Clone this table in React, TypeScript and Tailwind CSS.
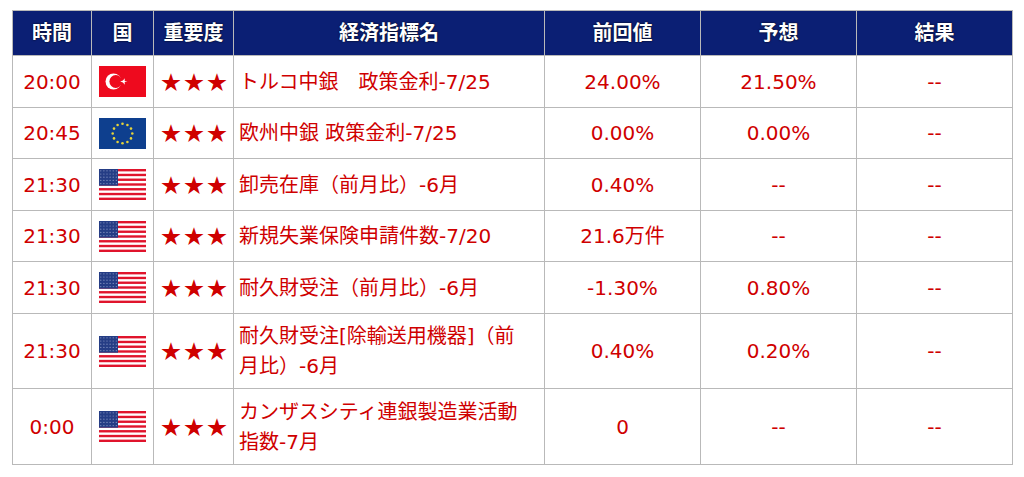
import React from "react";

const FONT = '"DejaVu Sans","Noto Sans CJK JP",sans-serif';

type Row = { time: string; flag: "tr" | "eu" | "us"; name: string; prev: string; fc: string; res: string };

const rows: Row[] = [
  { time: "20:00", flag: "tr", name: "トルコ中銀　政策金利-7/25", prev: "24.00%", fc: "21.50%", res: "--" },
  { time: "20:45", flag: "eu", name: "欧州中銀 政策金利-7/25", prev: "0.00%", fc: "0.00%", res: "--" },
  { time: "21:30", flag: "us", name: "卸売在庫（前月比）-6月", prev: "0.40%", fc: "--", res: "--" },
  { time: "21:30", flag: "us", name: "新規失業保険申請件数-7/20", prev: "21.6万件", fc: "--", res: "--" },
  { time: "21:30", flag: "us", name: "耐久財受注（前月比）-6月", prev: "-1.30%", fc: "0.80%", res: "--" },
  { time: "21:30", flag: "us", name: "耐久財受注[除輸送用機器]（前月比）-6月", prev: "0.40%", fc: "0.20%", res: "--" },
  { time: "0:00", flag: "us", name: "カンザスシティ連銀製造業活動指数-7月", prev: "0", fc: "--", res: "--" },
];

function TurkeyFlag() {
  return (
    <svg width="47" height="31" viewBox="0 0 47 31">
      <rect width="47" height="31" fill="#ee0a1e" />
      <circle cx="14.5" cy="15.5" r="8" fill="#fff" />
      <circle cx="16.8" cy="15.5" r="6.4" fill="#ee0a1e" />
      <polygon
        fill="#fff"
        points="21.2,15.5 24,14.6 25.7,12.2 25.7,15.1 28.5,15.5 25.7,15.9 25.7,18.8 24,16.4"
      />
    </svg>
  );
}

function EUFlag() {
  const stars = Array.from({ length: 12 }, (_, i) => {
    const a = (i * Math.PI * 2) / 12;
    return { x: 23.5 + Math.sin(a) * 9.8, y: 15.5 - Math.cos(a) * 9.8 };
  });
  return (
    <svg width="47" height="31" viewBox="0 0 47 31">
      <rect width="47" height="31" fill="#0e3f8e" />
      {stars.map((s, i) => (
        <circle key={i} cx={s.x} cy={s.y} r="1.3" fill="#e6d43a" />
      ))}
    </svg>
  );
}

function USFlag() {
  const sh = 31 / 13;
  const dots: { x: number; y: number }[] = [];
  for (let r = 0; r < 5; r++) for (let c = 0; c < 6; c++) dots.push({ x: 1.8 + c * 3.1, y: 1.8 + r * 3.2 });
  return (
    <svg width="47" height="31" viewBox="0 0 47 31">
      <rect width="47" height="31" fill="#fff" />
      {Array.from({ length: 7 }, (_, i) => (
        <rect key={i} x="0" y={i * 2 * sh} width="47" height={sh} fill="#e0142c" />
      ))}
      <rect x="0" y="0" width="19" height={sh * 7} fill="#253d85" />
      {dots.map((d, i) => (
        <circle key={i} cx={d.x} cy={d.y} r="0.6" fill="#8c9ac6" />
      ))}
    </svg>
  );
}

const Flag = ({ f }: { f: Row["flag"] }) => (f === "tr" ? <TurkeyFlag /> : f === "eu" ? <EUFlag /> : <USFlag />);

const headers = ["時間", "国", "重要度", "経済指標名", "前回値", "予想", "結果"];

export default function App() {
  const cell = "border-r border-b border-[#b9b9b9] flex items-center";
  return (
    <div className="w-[1024px] h-[477px] bg-white pt-[10px] pl-[12px]" style={{ fontFamily: FONT }}>
      <div className="w-[1001px] border-l border-t border-[#b9b9b9] grid grid-cols-[79px_62px_80px_311px_156px_156px_156px] grid-rows-[45px_52px_51px_52px_51px_52px_75px_76px] text-[20px] leading-[30px] text-[#cf0000]">
        {headers.map((h) => (
          <div
            key={h}
            className={`${cell} justify-center bg-[#0b1f74] text-white font-bold text-[20px] [text-shadow:0_0_2px_#000]`}
          >
            {h}
          </div>
        ))}
        {rows.map((r, i) => (
          <React.Fragment key={i}>
            <div className={`${cell} justify-center`}>{r.time}</div>
            <div className={`${cell} justify-center`}>
              <Flag f={r.flag} />
            </div>
            <div className={`${cell} justify-center`}>
              <span className="tracking-[3px] pl-[4px]" style={{ fontFamily: '"Noto Sans CJK JP",sans-serif' }}>
                ★★★
              </span>
            </div>
            <div className={`${cell} justify-start pl-[5px] pr-[20px]`}>
              <span>{r.name}</span>
            </div>
            <div className={`${cell} justify-center`}>{r.prev}</div>
            <div className={`${cell} justify-center`}>{r.fc}</div>
            <div className={`${cell} justify-center`}>{r.res}</div>
          </React.Fragment>
        ))}
      </div>
    </div>
  );
}
